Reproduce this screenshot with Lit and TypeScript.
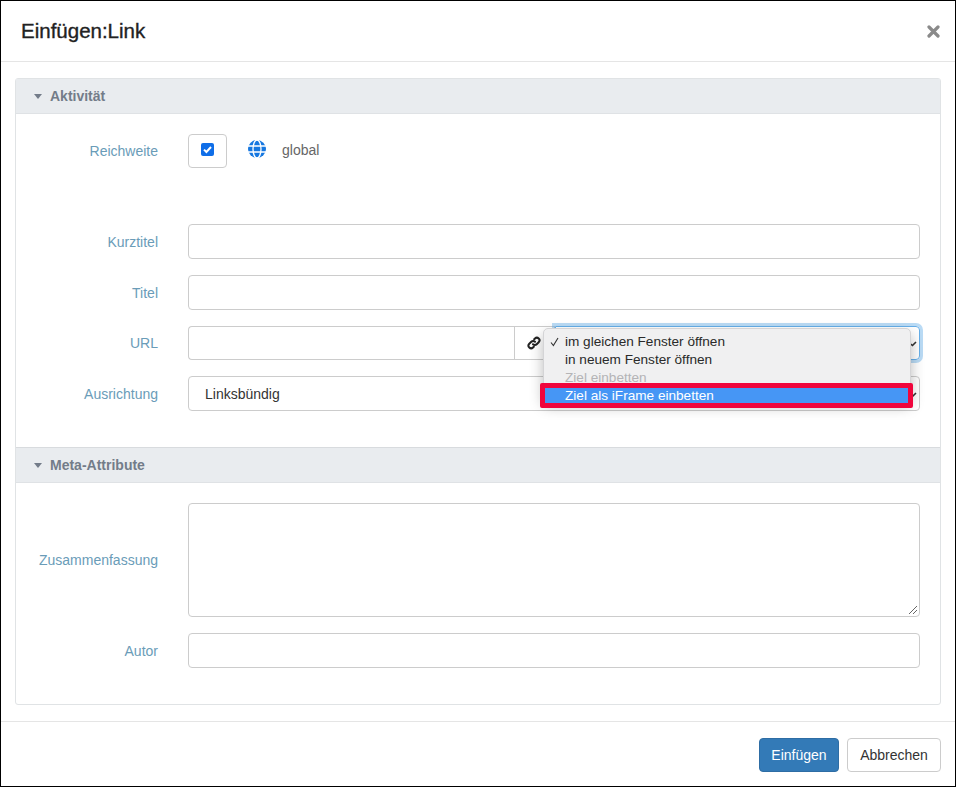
import { LitElement, html, css } from "lit";
import { customElement } from "lit/decorators.js";

@customElement("app-root")
export class AppRoot extends LitElement {
  static styles = css`
    :host { display: block; width: 956px; height: 787px; font-family: "Liberation Sans", Arial, sans-serif; color: #333; background: #fff; }
    * { box-sizing: border-box; }
    .modal { width: 956px; height: 787px; border: 1px solid #000; display: flex; flex-direction: column; background: #fff; }
    .head { height: 61px; flex: none; border-bottom: 1px solid #e5e5e5; display: flex; align-items: center; justify-content: space-between; padding: 0 15px 0 20px; }
    .head h4 { margin: 0; font-size: 20.5px; font-weight: 400; color: #222; -webkit-text-stroke: 0.35px #222; }
    .close { width: 13px; height: 13px; display: block; }
    .body { flex: 1; padding: 16px 14px; }
    .panel { border: 1px solid #e0e3e5; border-radius: 3px; height: 627px; display: flex; flex-direction: column; }
    .ph { height: 35px; flex: none; background: #e9ecef; border-bottom: 1px solid #dfe2e5; display: flex; align-items: center; padding-left: 18px; gap: 8px; font-size: 14px; font-weight: 700; color: #737c89; }
    .ph.meta { height: 36px; border-top: 1px solid #d8dbde; }
    .caret { width: 0; height: 0; border-left: 4.5px solid transparent; border-right: 4.5px solid transparent; border-top: 5px solid #737c89; }
    .sec1 { height: 333px; flex: none; padding: 20px 20px 0 0; display: flex; flex-direction: column; gap: 16px; }
    .sec2 { flex: 1; padding: 20px 20px 0 0; display: flex; flex-direction: column; gap: 16px; }
    .row { display: flex; align-items: center; gap: 29px; }
    .row.scope { height: 34px; margin-bottom: 40px; }
    .lbl { width: 142px; flex: none; margin-right: 1px; text-align: right; font-size: 14px; color: #6a9cb8; }
    .ctl { flex: 1; height: 35px; border: 1px solid #ccc; border-radius: 4px; background: #fff; min-width: 0; }
    .ctl.ta { height: 114px; position: relative; }
    .row.h34 .ctl { height: 34px; }
    .grip { position: absolute; right: 1px; bottom: 1px; width: 10px; height: 10px; }
    .chk { width: 39px; height: 34px; border: 1px solid #ccc; border-radius: 4px; display: flex; align-items: center; justify-content: center; flex: none; }
    .box { width: 13px; height: 13px; margin-bottom: 3px; background: #0f6ee8; border-radius: 2px; display: flex; align-items: center; justify-content: center; }
    .globe { width: 18px; height: 18px; margin: 0 0 4px 21px; flex: none; }
    .scopewrap { display: flex; align-items: center; }
    .gtxt { font-size: 14px; color: #666; margin: 0 0 2px 16px; }
    .url { flex: 1; display: flex; height: 34px; position: relative; min-width: 0; }
    .url .in { width: 326px; height: 34px; border: 1px solid #ccc; border-radius: 4px 0 0 4px; border-right: none; flex: none; }
    .addon { width: 41px; height: 34px; flex: none; border: 1px solid #ccc; display: flex; align-items: center; padding-left: 12px; background: #fff; }
    .fsel { flex: 1; height: 34px; border: 1px solid #66afe9; border-radius: 0 4px 4px 0; box-shadow: 0 0 0 3px rgba(102,175,233,.45); position: relative; }
    .sel { font-size: 14px; color: #333; padding-left: 16px; display: flex; align-items: center; position: relative; }
    .arrow { position: absolute; right: 2px; top: 50%; margin-top: -4px; width: 8px; height: 8px; }
    .menu { position: absolute; left: 355px; top: 2px; width: 368px; height: 72px; background: #f0f0f1; border-radius: 5px; border: 1px solid #d4d4d6; box-shadow: 0 6px 14px rgba(0,0,0,.28); padding: 4px 0 0; font-size: 13.6px; color: #2a2a2a; z-index: 2; }
    .opt { height: 18px; line-height: 18px; padding-left: 21px; white-space: nowrap; position: relative; }
    .tick { position: absolute; left: 6px; top: 4px; width: 9px; height: 10px; display: block; }
    .opt.dis { color: #b4b4b6; }
    .opt.act { color: #fff; background: #4696f5; }
    .hl { position: absolute; left: 352px; top: 57px; width: 373px; height: 25px; border: 5px solid #f0053c; border-radius: 2px; z-index: 3; pointer-events: none; }
    .foot { height: 65px; flex: none; border-top: 1px solid #e5e5e5; display: flex; justify-content: flex-end; align-items: flex-start; gap: 8px; padding: 16px 14px 0 0; }
    .btn { height: 34px; border-radius: 4px; font-size: 14px; display: flex; align-items: center; justify-content: center; font-family: inherit; }
    .pri { width: 80px; background: #337ab7; border: 1px solid #2e6da4; color: #fff; }
    .def { width: 94px; background: #fff; border: 1px solid #ccc; color: #333; }
  `;

  render() {
    const row = (l: string) => html`<div class="row"><div class="lbl">${l}</div><div class="ctl"></div></div>`;
    return html`
      <div class="modal">
        <div class="head">
          <h4>Einfügen:Link</h4>
          <svg class="close" viewBox="0 0 13 13"><path d="M2 2l9 9M11 2l-9 9" stroke="#8a8a8a" stroke-width="3.2" stroke-linecap="round" fill="none"/></svg>
        </div>
        <div class="body">
          <div class="panel">
            <div class="ph"><span class="caret"></span><span>Aktivität</span></div>
            <div class="sec1">
              <div class="row scope">
                <div class="lbl">Reichweite</div>
                <div class="scopewrap">
                  <div class="chk"><span class="box"><svg width="11" height="11" viewBox="0 0 11 11"><path d="M2 5.6l2.4 2.4 4.6-5" stroke="#fff" stroke-width="2" fill="none"/></svg></span></div>
                  <svg class="globe" viewBox="0 0 18 18"><circle cx="9" cy="9" r="9" fill="#1577e0"/><g stroke="#fff" stroke-width="1.3" fill="none"><ellipse cx="9" cy="9" rx="4" ry="9"/><path d="M0 6h18M0 12h18"/></g></svg>
                  <span class="gtxt">global</span>
                </div>
              </div>
              ${row("Kurztitel")}
              ${row("Titel")}
              <div class="row h34">
                <div class="lbl">URL</div>
                <div class="url">
                  <div class="in"></div>
                  <div class="addon"><svg width="14" height="14" viewBox="0 0 14 14"><g stroke="#222" stroke-width="2" fill="none" stroke-linecap="round"><path d="M6 8.2a2.6 2.6 0 0 0 3.7 0l2-2a2.6 2.6 0 0 0-3.7-3.7l-.8.8"/><path d="M8 5.8a2.6 2.6 0 0 0-3.7 0l-2 2a2.6 2.6 0 0 0 3.7 3.7l.8-.8"/></g></svg></div>
                  <div class="fsel"><svg class="arrow" viewBox="0 0 8 8"><path d="M1 4.5l2.5 2L7 3" stroke="#333" stroke-width="1.6" fill="none"/></svg></div>
                  <div class="menu">
                    <div class="opt"><svg class="tick" viewBox="0 0 9 10"><path d="M1 5.5l2.4 3L8 1" stroke="#333" stroke-width="1.1" fill="none"/></svg>im gleichen Fenster öffnen</div>
                    <div class="opt">in neuem Fenster öffnen</div>
                    <div class="opt dis">Ziel einbetten</div>
                    <div class="opt act">Ziel als iFrame einbetten</div>
                  </div>
                  <div class="hl"></div>
                </div>
              </div>
              <div class="row">
                <div class="lbl">Ausrichtung</div>
                <div class="ctl sel">Linksbündig<svg class="arrow" viewBox="0 0 8 8"><path d="M1 4.5l2.5 2L7 3" stroke="#333" stroke-width="1.6" fill="none"/></svg></div>
              </div>
            </div>
            <div class="ph meta"><span class="caret"></span><span>Meta-Attribute</span></div>
            <div class="sec2">
              <div class="row">
                <div class="lbl">Zusammenfassung</div>
                <div class="ctl ta"><svg class="grip" viewBox="0 0 10 10"><path d="M1 9l8-8M5 9l4-4" stroke="#666" stroke-width="1"/></svg></div>
              </div>
              ${row("Autor")}
            </div>
          </div>
        </div>
        <div class="foot">
          <div class="btn pri">Einfügen</div>
          <div class="btn def">Abbrechen</div>
        </div>
      </div>
    `;
  }
}
